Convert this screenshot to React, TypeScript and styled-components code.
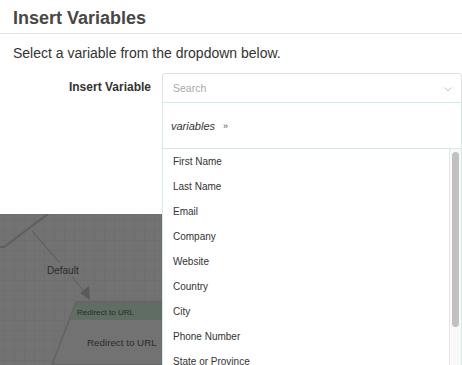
import React from "react";
import styled, { createGlobalStyle } from "styled-components";

const GlobalStyle = createGlobalStyle`
  html, body {
    margin: 0;
    padding: 0;
    background: #ffffff;
  }
  body {
    font-family: "Liberation Sans", Arial, Helvetica, sans-serif;
  }
`;

const variables = [
  "First Name",
  "Last Name",
  "Email",
  "Company",
  "Website",
  "Country",
  "City",
  "Phone Number",
  "State or Province",
  "Zip Code",
];

// visible part of the list vs its full height, for the thumb
const visibleRatio = 0.82;

export default function App(): JSX.Element {
  return (
    <Page>
      <GlobalStyle />
      <Modal>
        <Header>
          <Title>Insert Variables</Title>
        </Header>
        <Body>
          <Intro>Select a variable from the dropdown below.</Intro>
          <FieldRow>
            <FieldLabel>Insert Variable</FieldLabel>
            <SelectWrap>
              <SearchBox>
                <Placeholder>Search</Placeholder>
                <Chevron width="8" height="5" viewBox="0 0 8 5">
                  <polyline points="0.5,0.5 4,4 7.5,0.5" fill="none" stroke="#c4c4c4" strokeWidth="1" />
                </Chevron>
              </SearchBox>
              <Menu>
                <Breadcrumb>
                  <Crumb>variables</Crumb>
                  <CrumbSep>»</CrumbSep>
                </Breadcrumb>
                <ListArea>
                  <OptionList>
                    {variables.map((name) => (
                      <Option key={name}>{name}</Option>
                    ))}
                  </OptionList>
                  <ScrollTrack>
                    <ScrollThumb style={{ height: `${visibleRatio * 100}%` }} />
                  </ScrollTrack>
                </ListArea>
              </Menu>
            </SelectWrap>
          </FieldRow>
        </Body>
      </Modal>
      <Canvas>
        <svg width="462" height="151" viewBox="0 0 462 151">
          <defs>
            <pattern id="grid" width="10" height="10" patternUnits="userSpaceOnUse" x="4" y="6">
              <path d="M10 0 L0 0 0 10" fill="none" stroke="#6a6a6a" strokeWidth="1" />
            </pattern>
          </defs>
          <rect width="462" height="151" fill="#727272" />
          <rect width="462" height="151" fill="url(#grid)" />
          {/* diamond node corner */}
          <path d="M0 33 L4 33 L48 0" fill="none" stroke="#5e5e5e" strokeWidth="2" />
          {/* edge + label */}
          <line x1="32" y1="17" x2="60" y2="49" stroke="#5a5a5a" strokeWidth="1" />
          <line x1="72" y1="63" x2="84" y2="77" stroke="#5a5a5a" strokeWidth="1" />
          <polygon points="80,79 89,72 90,86" fill="#5a5a5a" />
          <text x="47" y="60" fontSize="10" fill="#2b2b2b" fontFamily="Liberation Sans, Arial, sans-serif">
            Default
          </text>
          {/* redirect node */}
          <polygon points="76,88 462,88 462,151 52,151" fill="#727272" stroke="#636363" strokeWidth="1.5" />
          <polygon points="76,89 462,89 462,106 71,106" fill="#5f6d62" />
          <text x="77" y="101" fontSize="8" fill="#2b2b2b" fontFamily="Liberation Sans, Arial, sans-serif">
            Redirect to URL
          </text>
          <text x="87" y="132" fontSize="9.8" fill="#2b2b2b" fontFamily="Liberation Sans, Arial, sans-serif">
            Redirect to URL
          </text>
        </svg>
      </Canvas>
    </Page>
  );
}

const Page = styled.div`
  position: relative;
  width: 462px;
  height: 365px;
  overflow: hidden;
  display: grid;
  grid-template-rows: 214px 1fr;
`;

const Modal = styled.div`
  background: #ffffff;
  display: flex;
  flex-direction: column;
  position: relative;
  z-index: 2;
`;

const Header = styled.div`
  height: 34px;
  box-sizing: border-box;
  border-bottom: 1px solid #e6e6e6;
  padding: 7px 13px 0;
`;

const Title = styled.h3`
  margin: 0;
  font-size: 18px;
  line-height: 22px;
  font-weight: bold;
  color: #474747;
`;

const Body = styled.div`
  padding: 10px 0 0 13px;
  display: flex;
  flex-direction: column;
  gap: 11px;
`;

const Intro = styled.p`
  margin: 0;
  font-size: 14px;
  line-height: 18px;
  color: #333333;
`;

const FieldRow = styled.div`
  display: grid;
  grid-template-columns: 138px 1fr;
  column-gap: 11px;
  align-items: start;
`;

const FieldLabel = styled.label`
  text-align: right;
  font-size: 12px;
  font-weight: bold;
  color: #333333;
  line-height: 16px;
  padding-top: 6px;
`;

const SelectWrap = styled.div`
  position: relative;
`;

const SearchBox = styled.div`
  height: 30px;
  box-sizing: border-box;
  border: 1px solid #e0e0e0;
  border-radius: 3px 3px 0 0;
  display: flex;
  align-items: center;
  justify-content: space-between;
  padding: 0 9px 0 10px;
  background: #ffffff;
`;

const Placeholder = styled.span`
  font-size: 10.5px;
  color: #a8a8a8;
`;

const Chevron = styled.svg`
  display: block;
  margin-top: 2px;
`;

const Menu = styled.div`
  position: absolute;
  top: 29px;
  left: 0;
  right: 0;
  height: 270px;
  background: #ffffff;
  border-left: 1px solid #d3ece3;
  border-right: 1px solid #d3ece3;
  border-top: 1px solid #d3ece3;
  display: flex;
  flex-direction: column;
  z-index: 5;
`;

const Breadcrumb = styled.div`
  height: 46px;
  box-sizing: border-box;
  border-bottom: 1px solid #d3ece3;
  display: flex;
  align-items: center;
  gap: 8px;
  padding: 0 8px;
`;

const Crumb = styled.span`
  font-size: 11px;
  font-style: italic;
  color: #333333;
`;

const CrumbSep = styled.span`
  font-size: 9px;
  color: #555555;
`;

const ListArea = styled.div`
  position: relative;
  height: 216px;
  overflow: hidden;
`;

const OptionList = styled.ul`
  list-style: none;
  margin: 0;
  padding: 0 12px 0 0;
`;

const Option = styled.li`
  height: 25px;
  line-height: 25px;
  padding-left: 10px;
  font-size: 10px;
  color: #333333;
  white-space: nowrap;
`;

const ScrollTrack = styled.div`
  position: absolute;
  top: 0;
  right: 0;
  bottom: 0;
  width: 12px;
  box-sizing: border-box;
  background: #f9f9f9;
  border-left: 1px solid #e6e6e6;
  padding: 3px 2px 0 2px;
`;

const ScrollThumb = styled.div`
  width: 7px;
  border-radius: 4px;
  background: #c1c1c1;
`;

const Canvas = styled.div`
  position: relative;
  z-index: 1;
  background: #727272;

  svg {
    display: block;
  }
`;
